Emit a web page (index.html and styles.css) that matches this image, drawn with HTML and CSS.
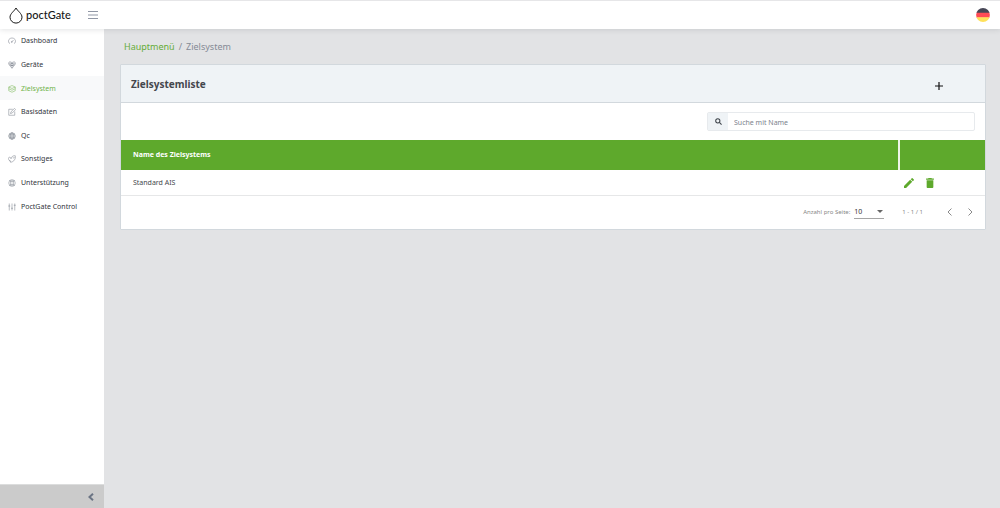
FILE: index.html
```html
<!DOCTYPE html>
<html lang="de">
<head>
<meta charset="utf-8">
<title>poctGate – Zielsystem</title>
<link rel="stylesheet" href="styles.css">
</head>
<body>
<header class="topbar">
  <a class="brand" href="#">
    <svg class="brand-drop" viewBox="0 0 14 17"><path d="M7 1C5.600 3.800 1 6.600 1 10.200a6 5.900 0 0 0 12 0C13 6.600 8.400 3.800 7 1Z"/></svg>
    <span>poctGate</span>
  </a>
  <button class="icon-btn menu-btn" aria-label="Menü"><svg viewBox="0 0 10 8"><path d="M0 .5h10M0 4h10M0 7.500h10"/></svg></button>
  <button class="icon-btn flag-btn" aria-label="Deutsch"><svg viewBox="0 0 14 14"><clipPath id="disc"><circle cx="7" cy="7" r="6.900"/></clipPath><g clip-path="url(#disc)"><path fill="#464655" d="M0 0h14v5H0z"/><path fill="#ff4b55" d="M0 4.700h14v5H0z"/><path fill="#ffe15a" d="M0 9.300h14v5H0z"/></g></svg></button>
</header>
<div class="shell">
  <aside class="sidebar">
    <nav class="nav">
      <a class="nav-link" href="#"><svg viewBox="0 0 16 16"><path d="M4 13.500C-1.500 10 1 2 8 2s9.500 8 4 11.500M7.500 10 11 6"/><circle cx="7.500" cy="10" r="1"/></svg><span>Dashboard</span></a>
      <a class="nav-link" href="#"><svg viewBox="0 0 16 16"><circle cx="4" cy="4" r="2.500"/><circle cx="12" cy="4" r="2.500"/><circle cx="8" cy="7" r="2.500"/><path d="M1.500 5c.5 4 3 5 6.500 9.500C11.500 10 14 9 14.500 5M8 1.500v13M4 9h8"/></svg><span>Geräte</span></a>
      <a class="nav-link active" href="#"><svg viewBox="0 0 16 16"><path d="m8 1 6.500 3L8 7 1.500 4ZM1.500 7.500l6.500 3 6.500-3M1.500 11.500l6.500 3 6.500-3M1.500 4v7.500M14.500 4v7.500"/></svg><span>Zielsystem</span></a>
      <a class="nav-link" href="#"><svg viewBox="0 0 16 16"><path d="M9.500 2.500h-8v12h12V7M5 11l1-3.500L13 .8l2.200 2.200-6.700 7Z"/></svg><span>Basisdaten</span></a>
      <a class="nav-link" href="#"><svg viewBox="0 0 16 16"><circle cx="8" cy="8" r="6.500"/><ellipse cx="8" cy="8" rx="3.500" ry="6.500"/><path d="M1 8h14M2 4.500h12M2 11.500h12M8 1v14"/></svg><span>Qc</span></a>
      <a class="nav-link" href="#"><svg viewBox="0 0 16 16"><path d="M5 13C-.5 9 .5 5 2.500 4.500S6 6 6 7.500C7 3 10 1 14.500 1.500 16 7 12 14 5 14.500L3.500 10M10 5l1 1.500L13 4"/></svg><span>Sonstiges</span></a>
      <a class="nav-link" href="#"><svg viewBox="0 0 16 16"><circle cx="8" cy="8" r="6.500"/><circle cx="8" cy="8" r="3"/><path d="m3 3 3 3m4 4 3 3m0-10-3 3m-4 4-3 3M6 1.500v3.500m4-3.500v3.500M6 11v3.500m4-3.500v3.500"/></svg><span>Unterstützung</span></a>
      <a class="nav-link" href="#"><svg viewBox="0 0 16 16"><path d="M2.500 1v14M8 1v14M13.500 1v14M.5 6h4M6 10.500h4M11.500 4.500h4"/></svg><span>PoctGate Control</span></a>
    </nav>
    <button class="collapse" aria-label="Seitenleiste einklappen"><svg viewBox="0 0 6 8"><path d="M5 .8 1.500 4 5 7.200"/></svg></button>
  </aside>
  <main class="content">
    <nav class="crumbs" aria-label="Brotkrumen"><a href="#">Hauptmenü</a><span>/</span><span>Zielsystem</span></nav>
    <section class="card">
      <div class="card-head">
        <h1>Zielsystemliste</h1>
        <button class="icon-btn add-btn" aria-label="Hinzufügen"><svg viewBox="0 0 8 8"><path d="M4 0v8M0 4h8"/></svg></button>
      </div>
      <div class="search-row">
        <div class="search">
          <label for="q" aria-label="Suche"><svg viewBox="0 0 8 8"><circle cx="3.200" cy="3.200" r="2.400"/><path d="m5 5 2.500 2.500"/></svg></label>
          <input id="q" type="text" placeholder="Suche mit Name">
        </div>
      </div>
      <table class="list">
        <thead><tr><th scope="col">Name des Zielsystems</th><th class="actions-col"></th></tr></thead>
        <tbody><tr>
          <td>Standard AIS</td>
          <td class="actions-col"><div class="actions">
            <button class="icon-btn" aria-label="Bearbeiten"><svg viewBox="3 3 18 18"><path d="M3 17.250V21h3.750L17.810 9.940l-3.750-3.750L3 17.250zM20.710 7.040a1 1 0 0 0 0-1.410l-2.340-2.340a1 1 0 0 0-1.410 0l-1.830 1.830 3.750 3.750 1.830-1.830z"/></svg></button>
            <button class="icon-btn" aria-label="Löschen"><svg viewBox="3 3 18 18"><path d="M6 19c0 1.100.9 2 2 2h8c1.100 0 2-.9 2-2V7H6v12zM19 4h-3.500l-1-1h-5l-1 1H5v2h14V4z"/></svg></button>
          </div></td>
        </tr></tbody>
      </table>
      <footer class="pager">
        <label for="size">Anzahl pro Seite:</label>
        <div class="size-box"><select id="size"><option>10</option><option>25</option><option>50</option></select><svg viewBox="0 0 6 3"><path d="M0 0h6L3 3Z"/></svg></div>
        <span class="range">1 - 1 / 1</span>
        <button class="icon-btn page-btn" aria-label="Vorherige Seite"><svg viewBox="0 0 5 8"><path d="M4.500.5 1 4l3.500 3.500"/></svg></button>
        <button class="icon-btn page-btn" aria-label="Nächste Seite"><svg viewBox="0 0 5 8"><path d="M.5.5 4 4 .5 7.500"/></svg></button>
      </footer>
    </section>
  </main>
</div>
</body>
</html>
```
FILE: styles.css
```css
* { box-sizing: border-box; }
body {
  margin: 0;
  min-height: 100vh;
  display: flex;
  flex-direction: column;
  background: #e2e3e5;
  color: #45484d;
  font: 7px/12px "Noto Sans", "Open Sans", sans-serif;
}
a { color: inherit; text-decoration: none; }
button, input, select { font: inherit; color: inherit; }
svg { display: block; fill: none; stroke: currentColor; }
.icon-btn { display: flex; padding: 0; border: 0; background: none; }

.topbar {
  position: relative;
  display: flex;
  align-items: center;
  height: 29px;
  padding: 0 10px 0 9px;
  border-top: 1px solid #e6e6e8;
  background: #fff;
  box-shadow: 0 1px 5px rgba(60, 65, 70, .14);
}
.brand { display: flex; align-items: center; gap: 3px; width: 60px; color: #171717; font: 500 11px/16px Lato, sans-serif; }
.brand-drop { flex: none; width: 14px; height: 17px; stroke-width: 1; }
.menu-btn { margin-left: 19px; color: #9097a5; }
.menu-btn svg { width: 10px; height: 8px; }
.flag-btn { margin-left: auto; }
.flag-btn svg { width: 14px; height: 14px; stroke: none; }

.shell { flex: 1; display: flex; }
.sidebar { display: flex; flex-direction: column; width: 104px; background: #fff; }
.nav { display: grid; grid-auto-rows: 1fr; height: 189px; }
.nav-link { display: flex; align-items: center; gap: 5px; padding: 1px 0 0 8px; color: #30343b; }
.nav-link svg { width: 8px; height: 8px; color: #737985; }
.nav-link.active { background: #f8f9fa; color: #70b34a; }
.nav-link.active svg { color: #70b34a; }
.collapse {
  display: flex;
  align-items: center;
  justify-content: flex-end;
  height: 24px;
  margin-top: auto;
  padding: 0 10px 0 0;
  border: 0;
  border-top: 1px solid #dcdddd;
  background: #cbcbcb;
  color: #6b7484;
}
.collapse svg { width: 6px; height: 8px; stroke-width: 2; }

.content { flex: 1; min-width: 0; padding: 11px 14px 0 16px; }
.crumbs { display: flex; gap: 4px; padding-left: 4px; color: #858b96; font-size: 9px; line-height: 14px; }
.crumbs a { color: #65ac38; }

.card { margin-top: 10px; border: 1px solid #d2d8dd; border-radius: 1px; background: #fff; }
.card-head {
  display: flex;
  align-items: center;
  justify-content: space-between;
  height: 38px;
  padding: 0 42px 0 10px;
  border-bottom: 1px solid #d2d8dd;
  background: #eff3f6;
}
.card-head h1 { margin: 0; font-size: 10px; line-height: 14px; font-weight: 700; color: #43464c; }
.add-btn { padding-top: 4px; color: #111; }
.add-btn svg { width: 8px; height: 8px; stroke-width: 1.200; }

.search-row { display: flex; justify-content: flex-end; padding: 9px 10px; }
.search { display: flex; width: 268px; height: 19px; border: 1px solid #e7eaed; border-radius: 2px; }
.search label { display: grid; place-items: center; width: 20px; background: #eff3f6; color: #3f444b; }
.search label svg { width: 7px; height: 7px; stroke-width: 1.200; }
.search input { flex: 1; min-width: 0; padding: 2px 6px 0; border: 0; background: none; outline: 0; }
.search input::placeholder { color: #7c838d; opacity: 1; }

.list { width: 100%; border-collapse: collapse; }
.list th { height: 30px; padding: 0 12px; background: #5ea92c; color: #fff; font-weight: 700; text-align: left; }
.list th.actions-col { border-left: 2px solid #eef5ea; }
.list td { height: 25px; padding: 2px 12px 0; border-bottom: 1px solid #e6e7e8; }
.list .actions-col { width: 10%; padding: 2px 5px 0; }
.actions { display: flex; gap: 11px; }
.actions svg { width: 10px; height: 10px; fill: #5ea92c; stroke: none; }

.pager { display: flex; align-items: center; justify-content: flex-end; height: 33px; padding-right: 12px; color: #878787; font-size: 6px; }
.size-box { display: flex; align-items: center; width: 30px; height: 14px; margin: 0 18px 0 4px; border-bottom: 1px solid #a5a5a5; }
.size-box select { flex: 1; min-width: 0; padding: 0; border: 0; background: none; color: #333; font-size: 7px; appearance: none; }
.size-box svg { width: 6px; height: 3px; margin-right: 1px; fill: #666; stroke: none; pointer-events: none; }
.page-btn { margin-left: 16px; color: #8a8a8a; }
.range + .page-btn { margin-left: 24px; }
.page-btn svg { width: 5px; height: 8px; }
```
